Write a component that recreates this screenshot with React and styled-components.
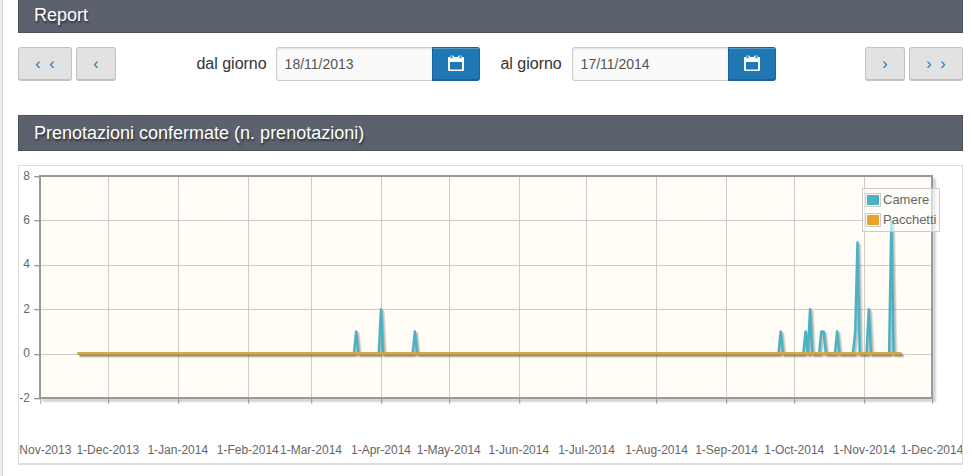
import React from "react";
import styled, { createGlobalStyle } from "styled-components";

const GlobalStyle = createGlobalStyle`
  * { box-sizing: border-box; }
  body {
    margin: 0;
    background: #fff;
    font-family: "Liberation Sans", Arial, sans-serif;
    color: #333;
  }
`;

const Page = styled.div`
  height: 476px;
  overflow: hidden;
  padding: 0 9px 0 15px;
  border-left: 3px solid #d9d9d9;
  border-image: linear-gradient(to right, #ededed 0 2px, #d9d9d9 2px 3px) 3;
  border-width: 0 0 0 3px;
`;

const Heading = styled.h2`
  margin: ${(p) => (p.$first ? "-3px 0 0" : "34px 0 0")};
  height: 36px;
  padding: 0 15px;
  border: 1px solid #47525a;
  background: #5b616d;
  color: #fff;
  font-size: 18px;
  font-weight: 400;
  line-height: 34px;
  text-shadow: 1px 2px 2px rgba(0, 0, 0, 0.5);
`;

const Toolbar = styled.div`
  display: flex;
  height: 34px;
  margin-top: 14px;
`;

const ButtonGroup = styled.div`
  display: flex;
  gap: 4px;
`;

const NavButton = styled.button`
  display: flex;
  align-items: center;
  justify-content: center;
  gap: 8.7px;
  width: ${(p) => (p.$wide ? 54 : 40)}px;
  height: 34px;
  padding: 0;
  border: 1px solid #c1c1c1;
  border-bottom-width: 2px;
  border-radius: 3px;
  background: #e2e2e2;
  color: #1f77b4;
  font: 16px "Liberation Sans", Arial, sans-serif;
`;

const Filters = styled.div`
  display: flex;
  gap: 20px;
  margin: 0 auto 0 80px;
`;

const Field = styled.label`
  display: flex;
  align-items: center;
  font-size: 16px;
  line-height: 34px;
`;

const FieldLabel = styled.span`
  width: ${(p) => p.$width}px;
  height: 34px;
  padding-left: 0.4px;
`;

const DateInput = styled.input`
  width: 156px;
  height: 34px;
  padding: 0 8px 0 7.6px;
  border: 1px solid #ccc;
  border-right: 0;
  border-radius: 3px 0 0 3px;
  background: #fafafa;
  box-shadow: inset 0 1px 2px rgba(0, 0, 0, 0.1);
  color: #555;
  font: 14px "Liberation Sans", Arial, sans-serif;
`;

const CalendarButton = styled.button`
  display: flex;
  align-items: center;
  justify-content: center;
  width: 48px;
  height: 34px;
  padding: 0 0 1px;
  border: 1px solid #1a629b;
  border-bottom-width: 2px;
  border-radius: 0 3px 3px 0;
  background: #1f77b4;
  box-shadow: inset 0 1px 0 rgba(255, 255, 255, 0.25);
`;

const ChartPanel = styled.div`
  position: relative;
  height: 300px;
  margin-top: 14px;
  border: 1px solid #ddd;
  border-bottom-width: 2px;
`;

const Plot = styled.svg`
  display: block;
  font: 12px "Liberation Sans", Arial, sans-serif;
  fill: #666;
`;

const Legend = styled.div`
  position: absolute;
  top: 22px;
  right: 22px;
  display: grid;
  grid-template-rows: 20px 20px;
  width: 78px;
  height: 44px;
  padding: 1px 2px;
  border: 1px solid #ccc;
  background: rgba(255, 255, 255, 0.6);
  font-size: 13px;
  line-height: 20px;
  color: #666;
  white-space: nowrap;
`;

const LegendItem = styled.div`
  display: flex;
  align-items: flex-start;
  gap: 2px;
`;

const Swatch = styled.span`
  flex: none;
  width: 16px;
  height: 14px;
  margin-top: 3px;
  border: 1px solid #ccc;
  padding: 1px;
  background: ${(p) => p.$color} content-box;
`;

const CalendarIcon = () => (
  <svg width="16" height="16" viewBox="0 0 16 16">
    <path
      fill="#fff"
      fillRule="evenodd"
      d="M1 2h14q1 0 1 1v12q0 1-1 1H1q-1 0-1-1V3q0-1 1-1zm1 5v7.500h12V7z"
    />
    <path d="M3.500 0.500v3M12.500 0.500v3" stroke="#8fbbda" strokeWidth="3" />
    <path d="M3.500 0v3M12.500 0v3" stroke="#5799c7" strokeWidth="1" />
    <path d="M5.500 0.500v3M10.500 0.500v3" stroke="#e3eff6" strokeWidth="1" />
  </svg>
);

const LEFT = 40, RIGHT = 932, TOP = 176, BOTTOM = 398;
const dayX = (day) => LEFT + (day * (RIGHT - LEFT)) / 395;
const valueY = (value) => TOP + ((8 - value) * (BOTTOM - TOP)) / 10;

const months = [
  ["1-Nov-2013", 0], ["1-Dec-2013", 30], ["1-Jan-2014", 61], ["1-Feb-2014", 92],
  ["1-Mar-2014", 120], ["1-Apr-2014", 151], ["1-May-2014", 181], ["1-Jun-2014", 212],
  ["1-Jul-2014", 242], ["1-Aug-2014", 273], ["1-Sep-2014", 304], ["1-Oct-2014", 334],
  ["1-Nov-2014", 365], ["1-Dec-2014", 395],
];
const values = [8, 6, 4, 2, 0, -2];
const bookings = {
  140: 1, 151: 2, 166: 1, 328: 1, 339: 1, 341: 2, 346: 1, 347: 1,
  353: 1, 361: 1, 362: 5, 367: 2, 377: 6,
};
const linePath = (data) => {
  const points = [];
  for (let day = 17; day <= 381; day++) {
    points.push(`${dayX(day).toFixed(2)},${valueY(data[day] || 0).toFixed(2)}`);
  }
  return "M" + points.join("L");
};
const series = [
  { name: "Camere", color: "#4bb2c5", path: linePath(bookings) },
  { name: "Pacchetti", color: "#eaa228", path: linePath({}) },
];
const crisp = (n) => Math.round(n - 0.05) + 0.5;

function Chart() {
  return (
    <Plot width="943" height="297" viewBox="19 166 943 297">
      <rect x={LEFT} y={TOP} width={RIGHT - LEFT} height={BOTTOM - TOP} fill="#fffdf6" />
      {values.map((v) => (
        <g key={v}>
          {v < 8 && v > -2 && <path d={`M${LEFT} ${crisp(valueY(v))}H${RIGHT}`} stroke="#ccc" />}
          <path d={`M35 ${crisp(valueY(v)) + 1}h5`} stroke="#000" strokeOpacity=".15" />
          <path d={`M34 ${crisp(valueY(v))}h5`} stroke="#999" />
          <text x="30" y={valueY(v) + 3.500} textAnchor="end">{v}</text>
        </g>
      ))}
      {months.map(([name, day]) => (
        <g key={name}>
          {day > 0 && day < 395 && (
            <path d={`M${crisp(dayX(day))} ${TOP}V${BOTTOM}`} stroke="#ccc" />
          )}
          <path d={`M${crisp(dayX(day)) + 1} 399v5`} stroke="#000" strokeOpacity=".08" />
          <path d={`M${crisp(dayX(day))} 399v5`} stroke="#bbb" />
          <text x={dayX(day)} y="454" textAnchor="middle">{name}</text>
        </g>
      ))}
      {[1, 2, 3].map((n) => (
        <path
          key={n}
          d={`M${RIGHT} ${TOP}V${BOTTOM}H${LEFT}`}
          transform={`translate(${n * 1.06} ${n * 1.06})`}
          fill="none" stroke="#000" strokeOpacity=".07" strokeWidth="3"
        />
      ))}
      <rect x={LEFT} y={TOP} width={RIGHT - LEFT} height={BOTTOM - TOP} fill="none" stroke="#999" strokeWidth="2" />
      {series.map((s) => (
        <g key={s.name} fill="none" strokeWidth="2.5" strokeLinejoin="round" strokeLinecap="round">
          {[1, 2, 3].map((n) => (
            <path
              key={n} d={s.path} stroke="#000" strokeOpacity=".1"
              transform={`translate(${n * 0.88} ${n * 0.88})`}
            />
          ))}
          <path d={s.path} stroke={s.color} />
        </g>
      ))}
    </Plot>
  );
}

function DateField({ label, width, value }) {
  return (
    <Field>
      <FieldLabel $width={width}>{label}</FieldLabel>
      <DateInput defaultValue={value} />
      <CalendarButton type="button" aria-label="Calendario"><CalendarIcon /></CalendarButton>
    </Field>
  );
}

export default function App() {
  return (
    <>
      <GlobalStyle />
      <Page>
        <Heading $first>Report</Heading>
        <Toolbar>
          <ButtonGroup>
            <NavButton $wide><span>‹</span><span>‹</span></NavButton>
            <NavButton><span>‹</span></NavButton>
          </ButtonGroup>
          <Filters>
            <DateField label="dal giorno" width={80} value="18/11/2013" />
            <DateField label="al giorno" width={72} value="17/11/2014" />
          </Filters>
          <ButtonGroup>
            <NavButton><span>›</span></NavButton>
            <NavButton $wide><span>›</span><span>›</span></NavButton>
          </ButtonGroup>
        </Toolbar>
        <Heading>Prenotazioni confermate (n. prenotazioni)</Heading>
        <ChartPanel>
          <Chart />
          <Legend>
            {series.map((s) => (
              <LegendItem key={s.name}><Swatch $color={s.color} />{s.name}</LegendItem>
            ))}
          </Legend>
        </ChartPanel>
      </Page>
    </>
  );
}
